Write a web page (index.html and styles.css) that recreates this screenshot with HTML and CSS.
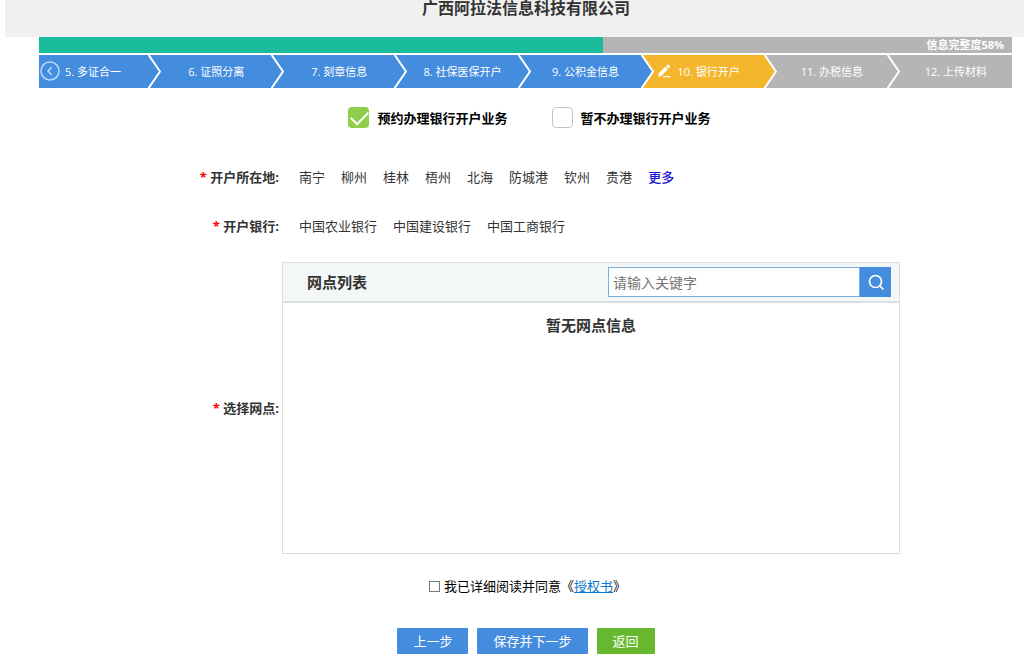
FILE: index.html
```html
<!DOCTYPE html>
<html lang="zh-CN">
<head>
<meta charset="utf-8">
<title>银行开户</title>
<link rel="stylesheet" href="styles.css">
</head>
<body>
<header class="header"><h1 class="company">广西阿拉法信息科技有限公司</h1></header>
<main>
  <section class="wizard">
    <div class="progress"><div class="progress-fill" style="width:58%"></div><span class="progress-text">信息完整度58%</span></div>
    <ol class="steps">
      <li class="step step-first">
        <button class="back" type="button" aria-label="向前"><svg width="20" height="20" viewBox="0 0 20 20"><circle cx="10" cy="10" r="9"/><path d="M11.8 6L8 10l3.8 4"/></svg></button>
        <span class="step-name">5. 多证合一</span>
        <svg class="arrow" viewBox="0 0 13 33" preserveAspectRatio="none"><path d="M0 -1L12 16.500L0 34"/></svg>
      </li>
      <li class="step"><span class="step-name">6. 证照分离</span><svg class="arrow" viewBox="0 0 13 33" preserveAspectRatio="none"><path d="M0 -1L12 16.500L0 34"/></svg></li>
      <li class="step"><span class="step-name">7. 刻章信息</span><svg class="arrow" viewBox="0 0 13 33" preserveAspectRatio="none"><path d="M0 -1L12 16.500L0 34"/></svg></li>
      <li class="step"><span class="step-name">8. 社保医保开户</span><svg class="arrow" viewBox="0 0 13 33" preserveAspectRatio="none"><path d="M0 -1L12 16.500L0 34"/></svg></li>
      <li class="step"><span class="step-name">9. 公积金信息</span><svg class="arrow to-current" viewBox="0 0 13 33" preserveAspectRatio="none"><path d="M0 -1L12 16.500L0 34"/></svg></li>
      <li class="step current" aria-current="step">
        <svg class="pencil" width="14" height="14" viewBox="0 0 14 14"><path d="M1 12.800l.8-3.600 6.500-6.500 2.600 2.600-6.500 6.500zM9 2l1.200-1.200q.7-.5 1.300 0l1.300 1.300q.5.600 0 1.200L11.600 4.500zM6.500 12h7v1.300h-8z"/></svg>
        <span class="step-name">10. 银行开户</span>
        <svg class="arrow to-todo" viewBox="0 0 13 33" preserveAspectRatio="none"><path d="M0 -1L12 16.500L0 34"/></svg>
      </li>
      <li class="step todo"><span class="step-name">11. 办税信息</span><svg class="arrow" viewBox="0 0 13 33" preserveAspectRatio="none"><path d="M0 -1L12 16.500L0 34"/></svg></li>
      <li class="step todo"><span class="step-name">12. 上传材料</span></li>
    </ol>
  </section>

  <form>
    <div class="options">
      <label class="option"><input class="option-box" type="checkbox" checked>预约办理银行开户业务</label>
      <label class="option"><input class="option-box" type="checkbox">暂不办理银行开户业务</label>
    </div>

    <div class="row">
      <span class="row-label" id="city"><span class="star">*</span> 开户所在地:</span>
      <div class="choices" role="group" aria-labelledby="city">
        <button type="button" class="choice">南宁</button>
        <button type="button" class="choice">柳州</button>
        <button type="button" class="choice">桂林</button>
        <button type="button" class="choice">梧州</button>
        <button type="button" class="choice">北海</button>
        <button type="button" class="choice">防城港</button>
        <button type="button" class="choice">钦州</button>
        <button type="button" class="choice">贵港</button>
        <a class="more" href="#">更多</a>
      </div>
    </div>

    <div class="row">
      <span class="row-label" id="bank"><span class="star">*</span> 开户银行:</span>
      <div class="choices" role="group" aria-labelledby="bank">
        <button type="button" class="choice">中国农业银行</button>
        <button type="button" class="choice">中国建设银行</button>
        <button type="button" class="choice">中国工商银行</button>
      </div>
    </div>

    <div class="row">
      <span class="row-label" id="branch"><span class="star">*</span> 选择网点:</span>
      <section class="panel" aria-labelledby="branch">
        <div class="panel-head">
          <h2 class="panel-title">网点列表</h2>
          <div class="search">
            <input class="search-input" type="text" placeholder="请输入关键字" aria-label="请输入关键字">
            <button class="search-button" type="button" aria-label="搜索"><svg width="18" height="18" viewBox="0 0 18 18"><circle cx="8.500" cy="8.500" r="6"/><path d="M12.800 12.800L16.500 16.500"/></svg></button>
          </div>
        </div>
        <p class="empty">暂无网点信息</p>
      </section>
    </div>

    <div class="agree">
      <input class="agree-box" type="checkbox" id="agree"><label for="agree">我已详细阅读并同意《<a class="agree-link" href="#">授权书</a>》</label>
    </div>

    <div class="actions">
      <button class="button" type="button">上一步</button>
      <button class="button" type="submit">保存并下一步</button>
      <button class="button button-green" type="button">返回</button>
    </div>
  </form>
</main>
</body>
</html>
```
FILE: styles.css
```css
* { box-sizing: border-box; }
body {
  margin: 0;
  background: #fff;
  color: #333;
  font: 13px/20px "Open Sans", "Noto Sans CJK SC", sans-serif;
}
button, input { font: inherit; margin: 0; }
button { border: 0; padding: 0; cursor: pointer; }

.header { margin-left: 5px; padding-bottom: 20px; background: #f0f0f0; }
.company {
  margin: 0;
  padding-left: 23px;
  font-size: 16px;
  line-height: 17px;
  text-align: center;
}

.wizard { margin: 0 12px 0 39px; }
.progress { display: flex; height: 16px; background: #b5b5b5; }
.progress-fill { background: #1bbc9b; }
.progress-text {
  flex: 1;
  padding-right: 8px;
  color: #fff;
  font-size: 11px;
  font-weight: bold;
  line-height: 16px;
  text-align: right;
}

.steps {
  display: grid;
  grid-template-columns: 122fr repeat(6, 123fr) 112fr;
  margin: 2px 0 0;
  padding: 0;
  list-style: none;
}
.step {
  position: relative;
  display: flex;
  align-items: center;
  height: 33px;
  background: #448cde;
  color: #fff;
  font-size: 11px;
}
.step.current { background: #f4b62c; }
.step.todo { background: #b5b5b5; }
.step-name { flex: 1; text-align: center; white-space: nowrap; }
.step-first .step-name { padding-left: 5px; text-align: left; }
.arrow { width: 13px; height: 33px; fill: #448cde; stroke: #fff; stroke-width: 2; background: #448cde; }
.to-current { background: #f4b62c; }
.to-todo { background: #b5b5b5; fill: #f4b62c; }
.todo .arrow { background: #b5b5b5; fill: #b5b5b5; }
.back { display: flex; margin-left: 1px; margin-bottom: 2px; background: none; }
.back svg { fill: none; stroke: #b9dcfa; stroke-width: 1.5; }
.pencil { position: absolute; left: 3px; top: 9px; fill: #fff; }

.options { display: flex; justify-content: center; gap: 44px; margin-top: 19px; padding-left: 35px; }
.option { display: flex; align-items: center; gap: 8px; color: #000; font-weight: bold; }
.option-box {
  appearance: none;
  width: 21px;
  height: 21px;
  border: 1px solid #c4c4c4;
  border-radius: 4px;
  background: #fff;
}
.option-box:checked { display: flow-root; border: 0; background: #8fce4a; }
.option-box:checked::after {
  content: "";
  display: block;
  width: 15px;
  height: 8px;
  margin: 4px 3px;
  border-left: 2px solid #fff;
  border-bottom: 2px solid #fff;
  transform: rotate(-45deg);
}

.row {
  display: grid;
  grid-template-columns: 279fr 618fr 121fr;
  column-gap: 3px;
  align-items: center;
  margin-top: 29px;
}
.options + .row { margin-top: 39px; }
.row:has(.panel) { margin-top: 26px; }
.row-label { font-weight: bold; text-align: right; }
.star { color: #f00; }
.choices { display: flex; flex-wrap: wrap; gap: 16px; padding-left: 17px; }
.choice { background: none; color: #333; }
.more { color: #1a14d8; font-weight: 500; text-decoration: none; }

.panel { min-height: 292px; border: 1px solid #dedede; }
.panel-head {
  display: flex;
  align-items: center;
  justify-content: space-between;
  padding: 4px 8px 4px 24px;
  border-bottom: 2px solid #dcdfe0;
  background: #f3f7f8;
}
.panel-title { margin: 0; font-size: 15px; }
.search { display: flex; flex: 0 1 283px; }
.search-input {
  flex: 1;
  min-width: 0;
  height: 30px;
  padding: 0 4px;
  border: 1px solid #78aee0;
  background: #fff;
  font-size: 14px;
}
.search-input::placeholder { color: #757575; }
.search-button { display: grid; place-items: center; width: 31px; background: #448cde; }
.search-button svg { fill: none; stroke: #fff; stroke-width: 1.7; }
.empty { margin: 12px 0 0; font-size: 15px; font-weight: bold; text-align: center; }

.agree { display: flex; align-items: center; justify-content: center; gap: 4px; margin-top: 22px; padding-left: 31px; color: #000; }
.agree-box { appearance: none; width: 11px; height: 11px; border: 1px solid #777; background: #fff; }
.agree-link { color: #0a78d0; }

.actions { display: flex; justify-content: center; gap: 9px; margin-top: 32px; padding-left: 28px; }
.button { height: 26px; padding: 0 16px; border-radius: 1px; background: #448cde; color: #fff; }
.button-green { background: #67b82f; }
```
